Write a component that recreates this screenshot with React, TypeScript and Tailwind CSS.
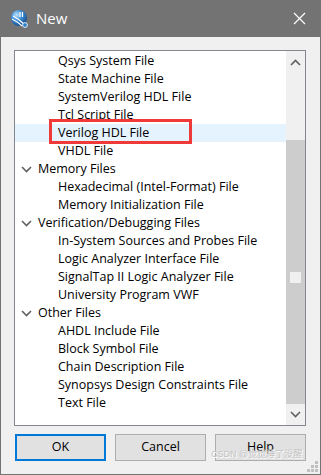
import React from "react";

type Item = { label: string; level: 0 | 1; selected?: boolean };

const items: Item[] = [
  { label: "Qsys System File", level: 1 },
  { label: "State Machine File", level: 1 },
  { label: "SystemVerilog HDL File", level: 1 },
  { label: "Tcl Script File", level: 1 },
  { label: "Verilog HDL File", level: 1, selected: true },
  { label: "VHDL File", level: 1 },
  { label: "Memory Files", level: 0 },
  { label: "Hexadecimal (Intel-Format) File", level: 1 },
  { label: "Memory Initialization File", level: 1 },
  { label: "Verification/Debugging Files", level: 0 },
  { label: "In-System Sources and Probes File", level: 1 },
  { label: "Logic Analyzer Interface File", level: 1 },
  { label: "SignalTap II Logic Analyzer File", level: 1 },
  { label: "University Program VWF", level: 1 },
  { label: "Other Files", level: 0 },
  { label: "AHDL Include File", level: 1 },
  { label: "Block Symbol File", level: 1 },
  { label: "Chain Description File", level: 1 },
  { label: "Synopsys Design Constraints File", level: 1 },
  { label: "Text File", level: 1 },
];

function QuartusIcon() {
  return (
    <svg width="20" height="20" viewBox="0 0 20 20">
      <defs>
        <radialGradient id="qg" cx="35%" cy="30%" r="75%">
          <stop offset="0%" stopColor="#bfe3ff" />
          <stop offset="45%" stopColor="#3d8fd6" />
          <stop offset="100%" stopColor="#124c8c" />
        </radialGradient>
      </defs>
      <circle cx="9" cy="9" r="8" fill="url(#qg)" />
      <path d="M3 7 C7 9 11 12 15 16" stroke="#fff" strokeWidth="1.3" fill="none" />
      <path d="M2 10 C6 12 9 14 12 17" stroke="#fff" strokeWidth="1.1" fill="none" />
      <path d="M10 3 L10 8 M12.5 3 L12.5 8" stroke="#fff" strokeWidth="1.2" />
      <circle cx="15" cy="16" r="2.4" fill="#2d7cc4" stroke="#dff0ff" strokeWidth="1" />
    </svg>
  );
}

function Chevron({ up }: { up?: boolean }) {
  return (
    <svg width="11" height="7" viewBox="0 0 11 7">
      <polyline
        points={up ? "1,6 5.5,1.5 10,6" : "1,1 5.5,5.5 10,1"}
        fill="none"
        stroke="#606060"
        strokeWidth="1.6"
      />
    </svg>
  );
}

export default function App() {
  return (
    <div
      className="flex h-[475px] w-[321px] flex-col border-x border-b border-[#737373] bg-[#f0f0f0] text-[12.5px] text-black"
      style={{ fontFamily: '"Open Sans", "Noto Sans", sans-serif' }}
    >
      <div className="flex h-[37px] shrink-0 items-center bg-[#737373] pl-[9px] pr-[14px]">
        <QuartusIcon />
        <span className="ml-[6px] text-[15px] text-white">New</span>
        <svg className="ml-auto" width="13" height="13" viewBox="0 0 13 13">
          <path d="M1 1 L12 12 M12 1 L1 12" stroke="#fff" strokeWidth="1.2" />
        </svg>
      </div>

      <div className="ml-[13px] mt-[13px] flex h-[376px] w-[292px] border border-[#828790] bg-white">
        <div className="flex-1 overflow-hidden pt-[1px]">
          {items.map((it) => (
            <div
              key={it.label}
              className={`flex h-[18px] items-center whitespace-nowrap ${it.selected ? "bg-[#e5f3ff]" : ""}`}
            >
              {it.level === 0 ? (
                <>
                  <span className="ml-[5px] flex w-[12px] justify-center">
                    <Chevron />
                  </span>
                  <span className="ml-[6px]">{it.label}</span>
                </>
              ) : (
                <span className="relative ml-[43px]">
                  {it.label}
                  {it.selected && (
                    <span className="absolute -left-[9px] -top-[5px] h-[25px] w-[143px] border-[3px] border-[#f03a3a]" />
                  )}
                </span>
              )}
            </div>
          ))}
        </div>
        <div className="flex w-[19px] flex-col items-center bg-[#f0f0f0]">
          <div className="flex h-[19px] items-center justify-center pt-[4px]">
            <Chevron up />
          </div>
          <div className="mt-[70px] flex h-[264px] w-full items-center justify-center bg-[#cdcdcd] pt-[10px]">
            <div className="h-[11px] w-[11px] bg-[#f0f0f0]" />
          </div>
          <div className="mt-auto flex h-[20px] items-center justify-center pb-[2px]">
            <Chevron />
          </div>
        </div>
      </div>

      <div className="relative ml-[14px] mt-[8px] flex gap-[9px]">
        <button className="h-[27px] w-[91px] border-2 border-[#0078d7] bg-[#e1e1e1]">OK</button>
        <button className="h-[27px] w-[91px] border border-[#adadad] bg-[#e1e1e1]">Cancel</button>
        <button className="h-[27px] w-[91px] border border-[#adadad] bg-[#e1e1e1]">Help</button>
        <span
          className="absolute left-[196px] top-[16px] whitespace-nowrap text-[9px] leading-none text-[#c4c4c4]"
          style={{ fontFamily: '"Liberation Sans", "Noto Sans CJK SC", sans-serif', textShadow: "1px 1px 0 #ffffff" }}
        >
          CSDN @觉觉睡了没醒
        </span>
      </div>

      <div className="mt-auto mb-[2px] mr-[2px] grid grid-cols-3 gap-[1px] self-end">
        {[0, 0, 1, 0, 1, 1, 1, 1, 1].map((v, i) => (
          <div key={i} className={`h-[3px] w-[3px] ${v ? "bg-[#c0c0c0]" : ""}`} />
        ))}
      </div>
    </div>
  );
}
